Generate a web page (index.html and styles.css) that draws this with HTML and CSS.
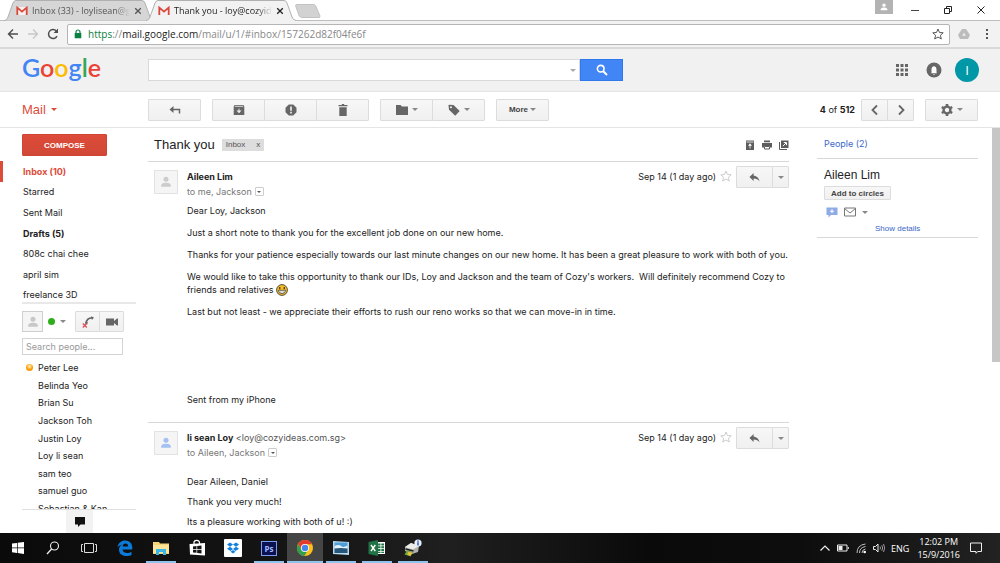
FILE: index.html
```html
<!DOCTYPE html>
<html lang="en">
<head>
<meta charset="UTF-8" />
<meta name="viewport" content="width=device-width, initial-scale=1" />
<title>Thank you - Mail</title>
<link rel="stylesheet" href="styles.css">
</head>
<body>

  <!-- shared icons -->
  <svg class="sprite" aria-hidden="true">
    <symbol id="i-gmail" viewBox="0 0 12 10"><rect x="1" y="1" width="10" height="8" fill="#f3f0ef"/><path d="M1.3 9V1.6L6 5.6l4.7-4V9" fill="none" stroke="#d8493c" stroke-width="1.8"/></symbol>
    <symbol id="i-close" viewBox="0 0 8 8"><path d="M1.2 1.2l5.6 5.6M6.800 1.200L1.200 6.800" fill="none" stroke="currentColor" stroke-width="1.300"/></symbol>
    <symbol id="i-person" viewBox="0 0 12 12"><circle cx="6" cy="3.300" r="2.500"/><path d="M1.200 10.800V9.300C1.200 7.600 4 6.800 6 6.800s4.800.8 4.800 2.500v1.500z"/></symbol>
    <symbol id="i-caret" viewBox="0 0 6 3"><path d="M0 0h6L3 3z"/></symbol>
    <symbol id="i-reply" viewBox="0 0 12 10"><path d="M5 0v2.800c4 .5 6 3 6.600 6.600C10 7.200 8 6.200 5 6.200V9L.4 4.500z"/></symbol>
    <symbol id="i-star" viewBox="0 0 12 12"><path d="M6 1l1.500 3.500 3.700.3-2.800 2.500.9 3.700L6 9l-3.300 2 .9-3.700L.8 4.800l3.700-.3z" fill="none" stroke="currentColor"/></symbol>
  </svg>

  <header class="browser">
    <div class="tabstrip">
      <div class="tab">
        <svg class="tab-shape" viewBox="0 0 150 21" preserveAspectRatio="none"><path d="M0 20.500C3 20 3 19 4 17L9 3Q10 .5 12 .5H138Q140 .5 141 3L146 17Q147 20 150 20.500" fill="#d6d6d6" stroke="#b0b0b0"/></svg>
        <svg class="tab-icon"><use href="#i-gmail"/></svg>
        <span class="tab-title">Inbox (33) - loylisean@gmail.com</span>
        <button class="tab-close" aria-label="Close tab"><svg><use href="#i-close"/></svg></button>
      </div>
      <div class="tab tab-active">
        <svg class="tab-shape" viewBox="0 0 150 21" preserveAspectRatio="none"><path d="M0 20.500C3 20 3 19 4 17L9 3Q10 .5 12 .5H138Q140 .5 141 3L146 17Q147 20 150 20.500V21H0z" fill="#f2f2f2"/><path d="M0 20.500C3 20 3 19 4 17L9 3Q10 .5 12 .5H138Q140 .5 141 3L146 17Q147 20 150 20.500" fill="none" stroke="#b0b0b0"/></svg>
        <svg class="tab-icon"><use href="#i-gmail"/></svg>
        <span class="tab-title">Thank you - loy@cozyideas.com.sg</span>
        <button class="tab-close" aria-label="Close tab"><svg><use href="#i-close"/></svg></button>
      </div>
      <button class="new-tab" aria-label="New tab"><svg viewBox="0 0 26 14"><path d="M1.500.5H18.500Q20 .5 21 2.500L25 12Q25 13.500 24 13.500H7Q5 13.500 4 11.500L.7 2Q.5.5 1.500.5z" fill="#d2d2d2" stroke="#c2c2c2"/></svg></button>
      <div class="window-controls">
        <button class="profile" aria-label="Profile"><svg><use href="#i-person"/></svg></button>
        <button aria-label="Minimize"><svg viewBox="0 0 8 8"><path d="M0 4.500h8" stroke="#444"/></svg></button>
        <button aria-label="Restore"><svg viewBox="0 0 8 8"><path d="M.5 2.500h5v5h-5zM2.500 2V.5h5v5H6" fill="none" stroke="#222"/></svg></button>
        <button aria-label="Close"><svg viewBox="0 0 8 8"><path d="M.5.5l7 7M7.500.5l-7 7" stroke="#222"/></svg></button>
      </div>
    </div>

    <div class="navbar">
      <button class="nav-btn" aria-label="Back"><svg viewBox="0 0 12 12"><path d="M11 6H2M6 1.500L1.500 6 6 10.500" fill="none" stroke="#4d4d4d" stroke-width="1.400"/></svg></button>
      <button class="nav-btn" aria-label="Forward"><svg viewBox="0 0 12 12"><path d="M1 6h9M6 1.500L10.500 6 6 10.500" fill="none" stroke="#c8c8c8" stroke-width="1.400"/></svg></button>
      <button class="nav-btn" aria-label="Reload"><svg viewBox="0 0 12 12"><path d="M10 8.200A4.500 4.500 0 1 1 9.300 2.900" fill="none" stroke="#4d4d4d" stroke-width="1.500"/><path d="M11 .6V5H6.600z" fill="#4d4d4d"/></svg></button>
      <div class="omnibox">
        <svg class="lock" viewBox="0 0 8 10"><path d="M2 5V3a2 2 0 0 1 4 0v2" fill="none" stroke="#0b8043" stroke-width="1.200"/><rect x=".7" y="4" width="6.600" height="5.200" rx=".5" fill="#0b8043"/></svg>
        <div class="url"><span class="scheme">https</span>://<span class="host">mail.google.com</span>/mail/u/1/#inbox/157262d82f04fe6f</div>
        <svg class="bookmark"><use href="#i-star"/></svg>
      </div>
      <div class="extensions">
        <button class="nav-btn" aria-label="Drive"><svg viewBox="0 0 12 12"><path d="M4 1h4l4 6-2 4H2L0 7z" fill="#bcbcbc"/><path d="M6 4.500L4.200 7.800h3.600z" fill="#eee"/></svg></button>
        <button class="nav-btn" aria-label="Menu"><svg viewBox="0 0 12 12"><path d="M5 1h2v2H5zM5 5h2v2H5zM5 9h2v2H5z" fill="#555"/></svg></button>
      </div>
    </div>
  </header>

  <div class="google-bar">
    <a class="logo" href="#" aria-label="Google"><span class="blue">G</span><span class="red">o</span><span class="yellow">o</span><span class="blue">g</span><span class="green">l</span><span class="red">e</span></a>
    <form class="search">
      <input class="search-input" type="text" aria-label="Search mail">
      <svg class="caret search-caret"><use href="#i-caret"/></svg>
      <button class="search-btn" type="button" aria-label="Search"><svg viewBox="0 0 12 12"><circle cx="4.700" cy="4.700" r="3.300" fill="none" stroke="#fff" stroke-width="1.600"/><path d="M7 7l4 4" stroke="#fff" stroke-width="2"/></svg></button>
    </form>
    <div class="account">
      <button aria-label="Apps"><svg viewBox="0 0 12 12"><path d="M0 0h3v3H0zM4.500 0h3v3h-3zM9 0h3v3H9zM0 4.500h3v3H0zM4.500 4.500h3v3h-3zM9 4.500h3v3H9zM0 9h3v3H0zM4.500 9h3v3h-3zM9 9h3v3H9z" fill="#666"/></svg></button>
      <button aria-label="Notifications"><svg class="bell" viewBox="0 0 16 16"><circle cx="8" cy="8" r="7.500" fill="#666"/><path d="M5.500 10.500V7.500C5.500 5.500 6.600 4.800 7.400 4.500Q8 3.500 8.600 4.500c.8.300 1.900 1 1.900 3v3l.5.8H5zM7 12h2v.6H7z" fill="#fff"/></svg></button>
      <button class="me" aria-label="Account">I</button>
    </div>
  </div>

  <div class="toolbar">
    <button class="mail-menu">Mail <svg class="caret"><use href="#i-caret"/></svg></button>
    <div class="group">
      <button class="btn" aria-label="Back to Inbox"><svg viewBox="0 0 12 12"><path d="M4.500 2v7L.5 5.500z" fill="#666"/><path d="M3 5.500h7.500V9.500" fill="none" stroke="#666" stroke-width="1.500"/></svg></button>
    </div>
    <div class="group">
      <button class="btn" aria-label="Archive"><svg viewBox="0 0 12 12"><path d="M1.500 1h9l.8 1.800V11H.7V2.800z" fill="#666"/><path d="M1.800 2.300h8.400M6 4.500v3" stroke="#ddd"/><path d="M3.500 6.500h5L6 9.300z" fill="#f3f3f3"/></svg></button>
      <button class="btn" aria-label="Report spam"><svg viewBox="0 0 12 12"><path d="M3.800.5h4.400l3.300 3.300v4.400l-3.300 3.300H3.800L.5 8.200V3.800z" fill="#666"/><path d="M5.200 2.500h1.600v4.200H5.200zM5.200 7.800h1.600v1.600H5.200z" fill="#f5f5f5"/></svg></button>
      <button class="btn" aria-label="Delete"><svg viewBox="0 0 12 12"><path d="M1.500 1h3l.6-1h1.800l.6 1h3v1.300h-9zM2.300 3.300h7.400V12H2.300z" fill="#666"/></svg></button>
    </div>
    <div class="group">
      <button class="btn" aria-label="Move to"><svg viewBox="0 0 12 12"><path d="M0 1h4.500L6 2.500h6V11H0z" fill="#666"/></svg><svg class="caret"><use href="#i-caret"/></svg></button>
      <button class="btn" aria-label="Labels"><svg viewBox="0 0 12 12"><path d="M.5 1.500Q.5.800 1.200.8L5.500 1 11.700 7 7.200 11.700 1 5.800z" fill="#666"/><circle cx="3" cy="3.200" r="1" fill="#f3f3f3"/></svg><svg class="caret"><use href="#i-caret"/></svg></button>
    </div>
    <div class="group">
      <button class="btn btn-text">More <svg class="caret"><use href="#i-caret"/></svg></button>
    </div>
    <div class="pager"><b>4</b> of <b>512</b></div>
    <div class="group">
      <button class="btn btn-small" aria-label="Newer"><svg viewBox="0 0 12 12"><path d="M8 1.500L3.500 6 8 10.500" fill="none" stroke="#666" stroke-width="1.800"/></svg></button>
      <button class="btn btn-small" aria-label="Older"><svg viewBox="0 0 12 12"><path d="M4 1.500L8.500 6 4 10.500" fill="none" stroke="#666" stroke-width="1.800"/></svg></button>
    </div>
    <div class="group">
      <button class="btn" aria-label="Settings"><svg viewBox="0 0 12 12"><circle cx="6" cy="6" r="3.400" fill="none" stroke="#666" stroke-width="2.400"/><path d="M6 0v2M6 10v2M.8 3l1.700 1M9.500 8l1.700 1M.8 9l1.700-1M9.500 4l1.700-1" stroke="#666" stroke-width="2.600"/></svg><svg class="caret"><use href="#i-caret"/></svg></button>
    </div>
  </div>

  <div class="content">
    <aside class="sidebar">
      <button class="compose">COMPOSE</button>
      <nav class="labels">
        <a class="current" href="#">Inbox (10)</a>
        <a href="#">Starred</a>
        <a href="#">Sent Mail</a>
        <a class="unread" href="#">Drafts (5)</a>
        <a href="#">808c chai chee</a>
        <a href="#">april sim</a>
        <a href="#">freelance 3D</a>
      </nav>
      <section class="chat">
        <div class="chat-bar">
          <div class="chat-me"><svg><use href="#i-person"/></svg></div>
          <span class="online"></span>
          <svg class="caret"><use href="#i-caret"/></svg>
          <div class="group chat-calls">
            <button class="btn" aria-label="Call"><svg viewBox="0 0 12 12"><path d="M4 8C4 4 6.500 1.800 10 1.800" fill="none" stroke="#666" stroke-width="1.700"/><path d="M9 .3l3 1.200-2 2.500zM2.800 6.500l3-.5-.5 2.500z" fill="#666"/><path d="M.8 7.500l4 4M4.800 7.500l-4 4" stroke="#d9505a" stroke-width="1.300"/></svg></button>
            <button class="btn" aria-label="Video"><svg viewBox="0 0 12 12"><path d="M0 2.500h8v2.600L11 2.500h1v7h-1L8 7v2.500H0z" fill="#666"/></svg></button>
          </div>
        </div>
        <input class="chat-search" type="text" placeholder="Search people..." aria-label="Search people">
        <div class="contacts">
          <ul>
            <li class="idle">Peter Lee</li>
            <li>Belinda Yeo</li>
            <li>Brian Su</li>
            <li>Jackson Toh</li>
            <li>Justin Loy</li>
            <li>Loy li sean</li>
            <li>sam teo</li>
            <li>samuel guo</li>
            <li>Sebastian &amp; Kan</li>
          </ul>
        </div>
        <button class="hangouts" aria-label="Hangouts"><svg viewBox="0 0 12 12"><path d="M1 1h10v7.500H6.500L4 11V8.500H1z" fill="#111"/></svg></button>
      </section>
    </aside>

    <main class="thread">
      <div class="subject">
        <h1>Thank you</h1>
        <span class="chip">Inbox <button aria-label="Remove label">x</button></span>
        <div class="subject-tools">
          <button aria-label="Expand all"><svg viewBox="0 0 10 10"><path d="M1 .5h8V10H1z" fill="#5c5c5c"/><path d="M1.500 2h7M5 5v3.500" stroke="#ddd"/><path d="M3 5.800h4L5 3.300z" fill="#fff"/></svg></button>
          <button aria-label="Print"><svg viewBox="0 0 10 10"><path d="M2 .5h6v1.800H2zM0 3h10v4.500H8V6H2v1.500H0z" fill="#5c5c5c"/><path d="M2.500 6.500h5V9h-5z" fill="#fff" stroke="#5c5c5c"/></svg></button>
          <button aria-label="Open in new window"><svg viewBox="0 0 10 10"><path d="M2 .5h7.500V8H2z" fill="#5c5c5c"/><path d="M.5 2v7.500H8" fill="none" stroke="#5c5c5c"/><path d="M3.800 6.200L7 3M4.800 2.500h2.700v2.700" fill="none" stroke="#fff"/></svg></button>
        </div>
      </div>

      <article class="message">
        <div class="avatar"><svg><use href="#i-person"/></svg></div>
        <div class="message-main">
          <div class="message-head">
            <div class="from">
              <div><b>Aileen Lim</b></div>
              <div class="to">to me, Jackson <button class="details" aria-label="Show details"><svg><use href="#i-caret"/></svg></button></div>
            </div>
            <time>Sep 14 (1 day ago)</time>
            <button class="star" aria-label="Star"><svg><use href="#i-star"/></svg></button>
            <div class="group">
              <button class="btn reply" aria-label="Reply"><svg><use href="#i-reply"/></svg></button>
              <button class="btn more" aria-label="More"><svg class="caret"><use href="#i-caret"/></svg></button>
            </div>
          </div>
          <div class="message-body">
            <p>Dear Loy, Jackson</p>
            <p>Just a short note to thank you for the excellent job done on our new home.</p>
            <p>Thanks for your patience especially towards our last minute changes on our new home. It has been a great pleasure to work with both of you.</p>
            <p>We would like to take this opportunity to thank our IDs, Loy and Jackson and the team of Cozy's workers.&nbsp; Will definitely recommend Cozy to friends and relatives <svg class="emoji" viewBox="0 0 12 12"><circle cx="6" cy="6" r="5.400" fill="#f6bd27" stroke="#44402e" stroke-width=".9"/><path d="M3.800 3v2.200M8.200 3v2.200" stroke="#222" stroke-width="1.100"/><path d="M2.400 6.300h7.200Q9.300 9.600 6 9.600T2.400 6.300z" fill="#fff" stroke="#333" stroke-width=".7"/><path d="M4.400 6.500v3M6 6.500v3M7.600 6.500v3" stroke="#777" stroke-width=".4"/></svg></p>
            <p>Last but not least - we appreciate their efforts to rush our reno works so that we can move-in in time.</p>
            <p class="signature">Sent from my iPhone</p>
          </div>
        </div>
      </article>

      <article class="message message-reply">
        <div class="avatar avatar-blue"><svg><use href="#i-person"/></svg></div>
        <div class="message-main">
          <div class="message-head">
            <div class="from">
              <div><b>li sean Loy</b> <span class="address">&lt;loy@cozyideas.com.sg&gt;</span></div>
              <div class="to">to Aileen, Jackson <button class="details" aria-label="Show details"><svg><use href="#i-caret"/></svg></button></div>
            </div>
            <time>Sep 14 (1 day ago)</time>
            <button class="star" aria-label="Star"><svg><use href="#i-star"/></svg></button>
            <div class="group">
              <button class="btn reply" aria-label="Reply"><svg><use href="#i-reply"/></svg></button>
              <button class="btn more" aria-label="More"><svg class="caret"><use href="#i-caret"/></svg></button>
            </div>
          </div>
          <div class="message-body">
            <p>Dear Aileen, Daniel</p>
            <p>Thank you very much!</p>
            <p>Its a pleasure working with both of u! :)</p>
          </div>
        </div>
      </article>
    </main>

    <aside class="people">
      <a class="people-title" href="#">People (2)</a>
      <div class="person-card">
        <h2>Aileen Lim</h2>
        <button class="btn btn-text circles">Add to circles</button>
        <div class="person-tools">
          <button aria-label="Chat"><svg viewBox="0 0 12 12"><path d="M.5 1.500h11v7.500H5L2.500 11.500V9h-2z" fill="#8fabe6"/><path d="M6 3.200v4M4 5.200h4" stroke="#fff"/></svg></button>
          <button aria-label="Email"><svg viewBox="0 0 12 12"><path d="M.5 2h11v8H.5zM.5 2.500L6 7l5.500-4.500" fill="none" stroke="#777"/></svg></button>
          <button aria-label="More"><svg class="caret"><use href="#i-caret"/></svg></button>
        </div>
        <a class="show-details" href="#">Show details</a>
      </div>
    </aside>
    <div class="scrollbar"></div>
  </div>

  <footer class="taskbar">
    <button class="task" aria-label="Start"><svg viewBox="0 0 18 18"><path d="M3 4.600l5-.7V8.600H3zM8.700 3.800L15 3v5.600H8.700zM3 9.300h5V14l-5-.7zM8.700 9.300H15V15l-6.300-.9z" fill="#fff"/></svg></button>
    <button class="task" aria-label="Search"><svg viewBox="0 0 18 18"><circle cx="10.500" cy="7" r="4" fill="none" stroke="#eee" stroke-width="1.100"/><path d="M7.600 10L3 15" stroke="#eee" stroke-width="1.300"/></svg></button>
    <button class="task" aria-label="Task view"><svg viewBox="0 0 18 18"><path d="M4.500 4.500h9v9h-9zM3 5.500H1.500v7H3M15 5.500h1.500v7H15" fill="none" stroke="#ddd"/></svg></button>
    <button class="task" aria-label="Edge"><svg viewBox="0 0 18 18"><path d="M1.500 8.200C2.500 3.700 5.500 1.500 9 1.500c4.500 0 7.300 3 7.300 7v2H6.500c.2 2.500 2.500 3.500 4.700 3.500 1.700 0 3-.4 4.300-1.200v3.100c-1.500.8-3.200 1.100-5 1.100-4.500 0-7.500-2.500-7.500-6.300 0-2.300 1.200-4.200 3.300-5.200C4.500 6 2.700 6.600 1.500 8.200zM6.600 7.600h5.600c0-2-1-3-2.700-3-1.600 0-2.600 1.200-2.900 3z" fill="#0a7bd9"/></svg></button>
    <button class="task running" aria-label="File Explorer"><svg viewBox="0 0 18 18"><path d="M1 3h6l1 1.500h9V15H1z" fill="#f5d477"/><path d="M1 6h16v8H1z" fill="#fbe49a"/><path d="M4 16V10h10v6h-3v-3H7v3z" fill="#39b5e8"/></svg></button>
    <button class="task" aria-label="Store"><svg viewBox="0 0 18 18"><path d="M6 5V3.500C6 1 11 .5 11.500 3.500V5" fill="none" stroke="#fff" stroke-width="1.200"/><path d="M1.500 5L17 4v12.500L2 15.500z" fill="#fff"/><path d="M5 7.500l3.500-.4v3H5zM9.200 7L13.500 6.500v3.600H9.200zM5 10.800h3.500v3L5 13.500zM9.200 10.800h4.300v3.700l-4.300-.6z" fill="#151515"/></svg></button>
    <button class="task" aria-label="Dropbox"><svg viewBox="0 0 18 18"><rect width="18" height="18" rx="1" fill="#fff"/><path d="M6 3.500l3 2-3 2.200-3-2.200zM12 3.500l3 2-3 2.200-3-2.200zM6 7.700l3 2.200-2.500 2L3 9.700zM12 7.700l3 2-3.500 2.200L9 9.900zM9 11l2.500 1.800L9 14.500l-2.500-1.700z" fill="#1081de"/></svg></button>
    <button class="task running" aria-label="Photoshop"><span class="ps">Ps</span></button>
    <button class="task running active" aria-label="Chrome"><svg viewBox="0 0 18 18"><circle cx="9" cy="9" r="8" fill="#fbc116"/><path d="M2.100 5A8 8 0 0 1 16 5.200H9a4 4 0 0 0-3.700 5z" fill="#e33b2e"/><path d="M2.100 5A8 8 0 0 0 8.300 17l3.400-5.500A4 4 0 0 1 5.500 11z" fill="#2f9e4f"/><circle cx="9" cy="9" r="4" fill="#fff"/><circle cx="9" cy="9" r="3.200" fill="#4486ee"/></svg></button>
    <button class="task running" aria-label="Photos"><svg viewBox="0 0 18 18"><path d="M1 2l16 1v13L1 15z" fill="#b9d9ef"/><path d="M2.500 3.500h13v6h-13z" fill="#4e9fd8"/><path d="M2.500 7Q7 5 9 7t6.500-.5V10h-13z" fill="#e4f1f7"/><path d="M2.500 9.500q6-1 13 0V14h-13z" fill="#28577c"/></svg></button>
    <button class="task running" aria-label="Excel"><svg viewBox="0 0 18 18"><path d="M9 3h8v12H9z" fill="#fff"/><path d="M10 4.500h2.500v2H10zM13.300 4.500H16v2h-2.700zM10 7.300h2.500v2H10zM13.300 7.300H16v2h-2.700zM10 10.100h2.500v2H10zM13.300 10.100H16v2h-2.700zM10 12.800h2.500V14H10zM13.300 12.800H16V14h-2.700z" fill="#217346"/><path d="M.5 3l9.500-2v16L.5 15z" fill="#217346"/><path d="M3 6l4.300 6.200M7.300 6L3 12.200" stroke="#fff" stroke-width="1.400"/></svg></button>
    <button class="task running" aria-label="Printer"><svg viewBox="0 0 18 18"><path d="M1 8l6-4 8 3-1 6-6 2-7-3z" fill="#b0b0ae"/><path d="M1 8l6-4 8 3-6 3.500z" fill="#ebebe8"/><path d="M1.500 10l8 2" stroke="#222" stroke-width="1.300"/><path d="M3 11.500l6 1.500-2.500 4.500-6-2z" fill="#6fa63a"/><path d="M4.500 12.800l4 1-2 3-3.500-1.300z" fill="#e6c13e"/><circle cx="14" cy="4" r="3.600" fill="#e8effa"/><path d="M14 1.500v1.200M14 3.300V6.500" stroke="#2d55b5" stroke-width="1.500"/></svg></button>

    <div class="tray">
      <svg viewBox="0 0 12 12"><path d="M1.500 8.500L6 4l4.500 4.500" fill="none" stroke="#eee" stroke-width="1.200"/></svg>
      <svg viewBox="0 0 12 12"><path d="M.5 3h9.500v6H.5zM11.300 5v2" fill="none" stroke="#eee"/><path d="M1.500 4h4v4h-4z" fill="#eee"/></svg>
      <svg viewBox="0 0 12 12"><path d="M2 11Q2 3 10.500 2M4.500 11Q4.500 5.500 10.500 4.500M7 11Q7 7.500 10.500 7" fill="none" stroke="#bbb"/><circle cx="9.700" cy="10" r="1.300" fill="#fff"/></svg>
      <svg viewBox="0 0 12 12"><path d="M.5 4.500H2.500L5 2v8L2.500 7.500H.5z" fill="none" stroke="#eee"/><path d="M7 4.500q1 1.500 0 3M8.800 3.200q1.700 2.800 0 5.600M10.500 2q2.400 4 0 8" fill="none" stroke="#999"/></svg>
      <span class="lang">ENG</span>
      <div class="clock"><span>12:02 PM</span><span>15/9/2016</span></div>
      <svg class="action-center" viewBox="0 0 12 12"><path d="M.5 1h11v8.500H7.700L6 11.300V9.500H.5z" fill="none" stroke="#eee"/></svg>
    </div>
  </footer>

</body>
</html>
```
FILE: styles.css
```css
* {
  box-sizing: border-box;
}

body {
  margin: 0;
  height: 100vh;
  display: flex;
  flex-direction: column;
  overflow: hidden;
  background: #fff;
  color: #222;
  font-family: Inter, "Liberation Sans", Arial, sans-serif;
  font-size: 9px;
  line-height: 13px;
}

button,
input {
  font: inherit;
  color: inherit;
  margin: 0;
  padding: 0;
  border: none;
  background: none;
}

button {
  display: inline-flex;
  align-items: center;
  justify-content: center;
  cursor: pointer;
}

a {
  text-decoration: none;
  color: inherit;
}

h1,
h2,
p,
ul {
  margin: 0;
  padding: 0;
  font-weight: normal;
}

h1,
h2,
.mail-menu,
.btn-text,
.chip,
.compose,
.show-details {
  font-family: "Liberation Sans", Arial, sans-serif;
}

svg {
  display: block;
  width: 12px;
  height: 12px;
  flex: none;
}

.sprite {
  position: absolute;
  width: 0;
  height: 0;
}

.caret {
  width: 6px;
  height: 3px;
  fill: #888;
}

/* Browser frame */

.browser {
  flex: none;
  font-family: "Open Sans", "Noto Sans", sans-serif;
}

.tabstrip {
  display: flex;
  height: 21px;
  padding-left: 4px;
  border-bottom: 1px solid #bdbdbd;
}

.tab {
  position: relative;
  display: flex;
  align-items: center;
  width: 150px;
  height: 21px;
  padding: 0 8px 0 12px;
  margin-right: -8px;
  color: #555;
}

.tab-active {
  z-index: 1;
  color: #222;
}

.tab-shape {
  position: absolute;
  inset: 0;
  width: 100%;
  height: 100%;
}

.tab-icon,
.tab-title,
.tab-close {
  position: relative;
}

.tab-icon {
  width: 12px;
  height: 10px;
}

.tab-title {
  flex: 1;
  margin: 0 4px;
  overflow: hidden;
  white-space: nowrap;
  -webkit-mask-image: linear-gradient(to right, #000 85%, transparent);
  mask-image: linear-gradient(to right, #000 85%, transparent);
}

.tab-close {
  margin-right: 4px;
}

.tab-close svg {
  width: 8px;
  height: 8px;
}

.new-tab {
  margin: 4px 0 0 7px;
  height: 14px;
}

.new-tab svg {
  width: 26px;
  height: 14px;
}

.window-controls {
  display: flex;
  align-items: flex-start;
  margin-left: auto;
  padding-right: 3px;
}

.window-controls button {
  width: 33px;
  height: 19px;
}

.window-controls svg {
  width: 8px;
  height: 8px;
}

.window-controls .profile {
  width: 18px;
  height: 14px;
  margin-right: 5px;
  background: #b3b3b3;
  fill: #fff;
}

.navbar {
  display: flex;
  align-items: center;
  gap: 8px;
  height: 28px;
  padding: 0 7px;
  background: #f2f2f2;
  border-bottom: 2px solid #d9d9d9;
}

.omnibox {
  flex: 1;
  display: flex;
  align-items: center;
  gap: 6px;
  height: 21px;
  padding: 0 5px 0 6px;
  background: #fff;
  border: 1px solid #b5b5b5;
  border-radius: 2px;
}

.lock {
  width: 8px;
  height: 10px;
}

.url {
  flex: 1;
  font-size: 10px;
  color: #888;
}

.scheme {
  color: #0b8043;
}

.host {
  color: #222;
}

.bookmark {
  color: #555;
}

.extensions {
  display: flex;
  gap: 11px;
}

/* Google bar */

.google-bar {
  flex: none;
  display: flex;
  align-items: center;
  height: 43px;
  padding: 0 21px 0 22px;
  background: #f1f1f1;
  border-bottom: 1px solid #e5e5e5;
}

.logo {
  width: 126px;
  padding-bottom: 6px;
  font-family: Lato, sans-serif;
  font-size: 25px;
  font-weight: 600;
  line-height: 32px;
}

.blue { color: #4285f4; }
.red { color: #ea4335; }
.yellow { color: #fbbc05; }
.green { color: #34a853; }

.search {
  position: relative;
  display: flex;
  flex: 1;
  max-width: 475px;
}

.search-input {
  flex: 1;
  height: 22px;
  padding: 0 20px 0 6px;
  background: #fff;
  border: 1px solid #d9d9d9;
}

.search-caret {
  position: absolute;
  right: 47px;
  top: 10px;
  fill: #aaa;
}

.search-btn {
  width: 43px;
  height: 22px;
  background: #4285f4;
  border: 1px solid #3079ed;
}

.account {
  display: flex;
  align-items: center;
  gap: 18px;
  margin-left: auto;
}

.account .bell {
  width: 16px;
  height: 16px;
}

.me {
  width: 24px;
  height: 24px;
  margin-left: -5px;
  border-radius: 50%;
  background: #0097a7;
  color: #fff;
  font-size: 12px;
}

/* Toolbar */

.toolbar {
  flex: none;
  display: flex;
  align-items: center;
  height: 36px;
  padding: 0 22px;
  border-bottom: 1px solid #e5e5e5;
}

.mail-menu {
  width: 126px;
  justify-content: flex-start;
  gap: 5px;
  color: #dd4b39;
  font-size: 13px;
}

.mail-menu .caret {
  fill: #dd4b39;
}

.group {
  display: flex;
}

.toolbar .group {
  margin-right: 11px;
}

.toolbar .group:last-child {
  margin-right: 0;
}

.btn {
  gap: 4px;
  width: 53px;
  height: 22px;
  background: linear-gradient(#f7f7f7, #f0f0f0);
  border: 1px solid #dcdcdc;
  border-radius: 1px;
  color: #444;
  font-weight: bold;
}

.btn + .btn {
  margin-left: -1px;
}

.btn-small {
  width: 27px;
}

.btn-text {
  gap: 2px;
  font-size: 8px;
}

.pager {
  margin-left: auto;
  margin-right: 6px;
}

/* Content */

.content {
  flex: 1;
  min-height: 0;
  display: flex;
}

.sidebar {
  flex: none;
  display: flex;
  flex-direction: column;
  width: 148px;
  padding: 6px 12px 0 22px;
}

.compose {
  flex: none;
  width: 85px;
  height: 22px;
  background: linear-gradient(#dd4b39, #d14836);
  border: 1px solid #cc4535;
  border-radius: 1px;
  color: #fff;
  font-size: 8px;
  font-weight: bold;
}

.labels {
  flex: none;
  display: flex;
  flex-direction: column;
  height: 144px;
  margin: 5px 0 -3px -22px;
}

.labels a {
  flex: 1;
  display: flex;
  align-items: center;
  padding-left: 23px;
}

.labels .current {
  padding-left: 20px;
  border-left: 3px solid #dd4b39;
  color: #dd4b39;
  font-weight: bold;
}

.labels .unread {
  font-weight: bold;
}

.chat {
  flex: 1;
  min-height: 0;
  display: flex;
  flex-direction: column;
  border-top: 2px solid #e8e8e8;
}

.chat-bar {
  display: flex;
  align-items: center;
  gap: 5px;
  margin: 7px 0 6px;
}

.chat-me {
  display: flex;
  align-items: center;
  justify-content: center;
  width: 21px;
  height: 21px;
  background: #f5f5f5;
  border: 1px solid #cfcfcf;
  fill: #c8c8c8;
}

.online {
  width: 7px;
  height: 7px;
  border-radius: 50%;
  background: #2fae1c;
}

.chat-calls {
  margin-left: 4px;
}

.chat-calls .btn {
  width: 25px;
  height: 21px;
}

.chat-search {
  width: 101px;
  height: 17px;
  padding: 0 3px;
  border: 1px solid #d4d4d4;
}

.chat-search::placeholder {
  color: #999;
  opacity: 1;
}

.contacts {
  flex: 1;
  min-height: 0;
  margin-top: 4px;
  overflow: hidden;
  border-bottom: 1px solid #e0e0e0;
}

.contacts ul {
  display: flex;
  flex-direction: column;
  height: 158px;
  list-style: none;
}

.contacts li {
  flex: 1;
  display: flex;
  align-items: center;
  padding-left: 16px;
}

.contacts .idle {
  padding-left: 4px;
}

.idle::before {
  content: "";
  width: 7px;
  height: 7px;
  margin-right: 5px;
  border-radius: 50%;
  background: radial-gradient(circle at 50% 35%, #ffe9a8 10%, #f90 55%);
}

.hangouts {
  flex: none;
  width: 27px;
  height: 23px;
  margin-left: 44px;
  background: #f2f2f2;
}

/* Thread */

.thread {
  flex: 1;
  min-width: 0;
}

.subject {
  display: flex;
  align-items: center;
  height: 34px;
  padding-left: 6px;
  border-bottom: 1px solid #d8d8d8;
}

.subject h1 {
  font-size: 13px;
}

.chip {
  display: flex;
  align-items: center;
  gap: 11px;
  height: 12px;
  margin-left: 7px;
  padding: 0 4px;
  background: #ddd;
  color: #555;
  font-size: 8px;
}

.subject-tools {
  display: flex;
  gap: 7px;
  margin-left: auto;
}

.subject-tools svg {
  width: 10px;
  height: 10px;
}

.message {
  display: flex;
  gap: 9px;
  padding: 4px 0 16px 6px;
  border-bottom: 1px solid #d8d8d8;
}

.avatar {
  flex: none;
  display: flex;
  align-items: center;
  justify-content: center;
  width: 24px;
  height: 24px;
  margin-top: 4px;
  background: #f5f5f5;
  border: 1px solid #e2e2e2;
  fill: #ccc;
}

.avatar-blue {
  fill: #a5c0f2;
}

.message-main {
  flex: 1;
  min-width: 0;
}

.message-head {
  display: flex;
  align-items: flex-start;
  line-height: 15px;
}

.from {
  flex: 1;
  padding-top: 3px;
}

.to {
  display: flex;
  align-items: center;
  gap: 3px;
  color: #777;
}

.address {
  color: #555;
}

.details {
  width: 9px;
  height: 9px;
  border: 1px solid #ccc;
  border-radius: 1px;
}

.details svg {
  width: 4px;
  height: 2px;
  fill: #555;
}

time {
  padding-top: 3px;
}

.star {
  margin: 4px 4px 0;
  color: #ccc;
}

.reply {
  width: 37px;
}

.reply svg {
  width: 11px;
  height: 9px;
  fill: #666;
}

.more {
  width: 17px;
}

.message-body {
  display: flex;
  flex-direction: column;
  gap: 9px;
  padding-top: 5px;
}

.emoji {
  display: inline-block;
  vertical-align: -3px;
}

.signature {
  margin-top: 66px;
}

.message-reply {
  border-bottom: none;
}

.message-reply .message-body {
  gap: 7px;
  padding-top: 15px;
}

/* People */

.people {
  flex: none;
  width: 161px;
  margin: 0 14px 0 28px;
}

.people-title {
  display: block;
  padding: 9px 7px 8px;
  border-bottom: 1px solid #d8d8d8;
  color: #3b67c9;
}

.person-card {
  padding: 9px 7px 2px;
  border-bottom: 1px solid #d8d8d8;
}

.person-card h2 {
  font-size: 12px;
  line-height: 15px;
}

.circles {
  width: 67px;
  height: 14px;
  margin-top: 3px;
}

.person-tools {
  display: flex;
  gap: 6px;
  padding: 6px 2px 4px;
}

.show-details {
  display: block;
  padding-left: 51px;
  color: #3b67c9;
  font-size: 8px;
}

.scrollbar {
  flex: none;
  width: 8px;
  height: 234px;
  background: #c6c6c6;
}

/* Taskbar */

.taskbar {
  flex: none;
  display: flex;
  height: 30px;
  background: linear-gradient(to right, #0a0a0a, #151515 30%, #1f1f1f 45%, #0a0a0a 65%, #0d0d0d 80%, #222);
  color: #fff;
  font-family: "Open Sans", "Noto Sans", sans-serif;
}

.task {
  position: relative;
  width: 36px;
}

.task:first-child {
  width: 35px;
}

.task svg {
  width: 18px;
  height: 18px;
}

.active {
  background: #454545;
}

.running::after {
  content: "";
  position: absolute;
  left: 3px;
  right: 3px;
  bottom: 0;
  height: 2px;
  background: #8ec3ee;
}

.active::after {
  left: 0;
  right: 0;
}

.ps {
  width: 16px;
  height: 15px;
  border: 1px solid #7b9cf0;
  background: #0b1152;
  color: #9fbcff;
  font-size: 8px;
  font-weight: bold;
  line-height: 13px;
}

.tray {
  display: flex;
  align-items: center;
  gap: 6px;
  margin-left: auto;
  padding-right: 18px;
}

.clock {
  display: flex;
  flex-direction: column;
  align-items: center;
  margin: 0 4px 0 2px;
}
```
